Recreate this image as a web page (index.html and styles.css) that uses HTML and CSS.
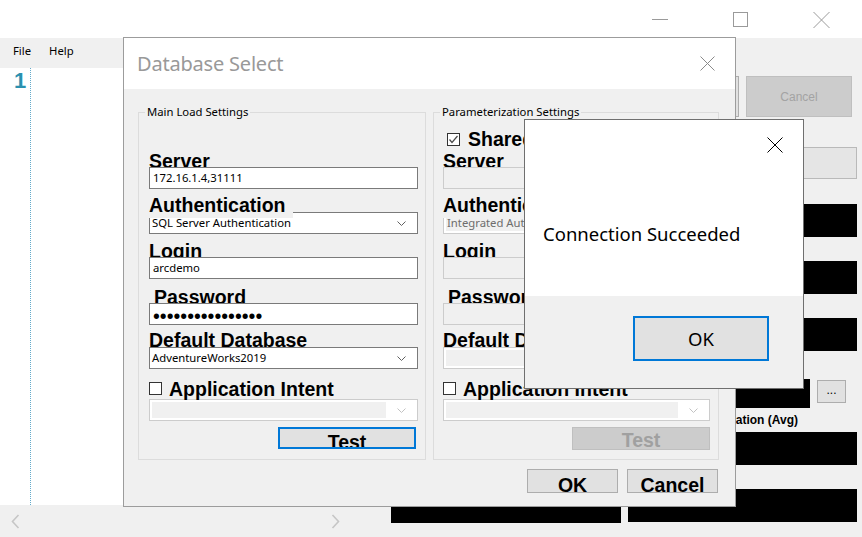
FILE: index.html
```html
<!DOCTYPE html>
<html>
<head>
<meta charset="utf-8">
<title>Database Select</title>
<link rel="stylesheet" href="styles.css">
</head>
<body>
<div class="app">
  <div class="titlebar">
    <div class="cap"><svg width="16" height="16"><line x1="0" y1="8.5" x2="16" y2="8.5"/></svg></div>
    <div class="cap"><svg width="16" height="16"><rect x="0.5" y="1.5" width="14" height="14"/></svg></div>
    <div class="cap"><svg width="17" height="17"><line x1="0.5" y1="1" x2="16.5" y2="17"/><line x1="16.5" y1="1" x2="0.5" y2="17"/></svg></div>
  </div>
  <div class="menubar"><span>File</span><span>Help</span></div>
  <div class="main">
    <div class="editor-col">
      <div class="editor">
        <div class="gutter"><span class="ln">1</span></div>
        <div class="code"></div>
      </div>
      <div class="hscroll">
        <div class="arr arr-l"><svg width="9" height="15"><polyline points="7.5,1 1.5,7.5 7.5,14"/></svg></div>
        <div class="track"></div>
        <div class="arr arr-r"><svg width="9" height="15"><polyline points="1.5,1 7.5,7.5 1.5,14"/></svg></div>
      </div>
    </div>
    <div class="panel">
      <div class="actions">
        <div class="pbtn ok">OK</div>
        <div class="pbtn cancel">Cancel</div>
      </div>
      <div class="wide"></div>
      <div class="fields">
        <div class="fld"><div class="fld-lbl">Server</div><div class="bar"></div></div>
        <div class="fld"><div class="fld-lbl">Database</div><div class="bar"></div></div>
        <div class="fld"><div class="fld-lbl">Start Time</div><div class="bar"></div></div>
        <div class="fld"><div class="fld-lbl">End Time</div><div class="bar"></div></div>
        <div class="fld"><div class="fld-lbl">Workload</div><div class="bar"></div></div>
        <div class="fld"><div class="fld-lbl">Replay</div><div class="bar"></div></div>
        <div class="fld f4"><div class="fld-lbl">Folder</div><div class="bar short"></div></div>
        <div class="fld f4"><div class="fld-lbl">Output</div><div class="barrow"><div class="bar short part"></div><div class="dots">...</div></div></div>
        <div class="fld"><div class="fld-lbl">Execution Count</div><div class="bar"></div></div>
        <div class="fld"><div class="fld-lbl right">Execution Duration (Avg)</div><div class="bar"></div></div>
        <div class="fld"><div class="fld-lbl">CPU (Avg)</div><div class="bar b6l"></div></div>
        <div class="fld"><div class="fld-lbl">Reads (Avg)</div><div class="bar"></div></div>
      </div>
    </div>
  </div>
</div>

<div class="dlg">
  <div class="dlg-title">
    <span class="dlg-name">Database Select</span>
    <svg class="dlg-x" width="15" height="15"><line x1="0.5" y1="0.5" x2="14.5" y2="14.5"/><line x1="14.5" y1="0.5" x2="0.5" y2="14.5"/></svg>
  </div>
  <div class="dlg-body">
    <div class="groups">
      <fieldset class="grp grp-main">
        <legend>Main Load Settings</legend>
        <div class="gbody">
          <div class="toprow"></div>
          <div class="lbl l-server">Server</div>
          <div class="tb">172.16.1.4,31111</div>
          <div class="lbl l-auth">Authentication</div>
          <div class="cb under"><span class="val">SQL Server Authentication</span><span class="chev"><svg width="9" height="5"><polyline points="0.5,0.5 4.5,4.5 8.5,0.5"/></svg></span></div>
          <div class="lbl l-login">Login</div>
          <div class="tb">arcdemo</div>
          <div class="lbl l-pass">Password</div>
          <div class="tb pw">••••••••••••••••</div>
          <div class="lbl l-db">Default Database</div>
          <div class="cb"><span class="val">AdventureWorks2019</span><span class="chev"><svg width="9" height="5"><polyline points="0.5,0.5 4.5,4.5 8.5,0.5"/></svg></span></div>
          <div class="chkrow"><span class="box"></span><span>Application Intent</span></div>
          <div class="cb dis"><span class="val"></span><span class="chev"><svg width="9" height="5"><polyline points="0.5,0.5 4.5,4.5 8.5,0.5"/></svg></span></div>
          <div class="btnrow main-row"><div class="wbtn test">Test</div></div>
        </div>
      </fieldset>
      <fieldset class="grp grp-param">
        <legend>Parameterization Settings</legend>
        <div class="gbody">
          <div class="toprow share"><span class="box"><svg width="11" height="11"><polyline points="1.5,5.5 4,8.5 9.5,2"/></svg></span><span>Shared Server</span></div>
          <div class="lbl l-server">Server</div>
          <div class="tb dis"></div>
          <div class="lbl l-auth">Authentication</div>
          <div class="cb dis under"><span class="val">Integrated Authentication</span><span class="chev"><svg width="9" height="5"><polyline points="0.5,0.5 4.5,4.5 8.5,0.5"/></svg></span></div>
          <div class="lbl l-login">Login</div>
          <div class="tb dis"></div>
          <div class="lbl l-pass">Password</div>
          <div class="tb dis"></div>
          <div class="lbl l-db">Default Database</div>
          <div class="cb dis"><span class="val"></span><span class="chev"><svg width="9" height="5"><polyline points="0.5,0.5 4.5,4.5 8.5,0.5"/></svg></span></div>
          <div class="chkrow"><span class="box"></span><span>Application Intent</span></div>
          <div class="cb dis"><span class="val"></span><span class="chev"><svg width="9" height="5"><polyline points="0.5,0.5 4.5,4.5 8.5,0.5"/></svg></span></div>
          <div class="btnrow"><div class="wbtn test-dis">Test</div></div>
        </div>
      </fieldset>
    </div>
    <div class="dlg-actions">
      <div class="wbtn dbtn">OK</div>
      <div class="wbtn dbtn">Cancel</div>
    </div>
  </div>
</div>

<div class="msg">
  <div class="msg-body">
    <svg class="msg-x" width="16" height="16"><line x1="0.5" y1="0.5" x2="15.5" y2="15.5"/><line x1="15.5" y1="0.5" x2="0.5" y2="15.5"/></svg>
    <div class="msg-text">Connection Succeeded</div>
  </div>
  <div class="msg-foot"><div class="msg-ok">OK</div></div>
</div>
</body>
</html>
```

FILE: styles.css
```css
* { box-sizing: border-box; }
html, body { margin: 0; padding: 0; }
body {
  width: 862px;
  height: 537px;
  overflow: hidden;
  position: relative;
  background: #f0f0f0;
  color: #000;
  font-family: "Noto Sans", "Liberation Sans", sans-serif;
  font-size: 11.3px;
}

/* ---------- background application ---------- */
.app { display: flex; flex-direction: column; height: 537px; }
.titlebar { height: 38px; background: #fff; display: flex; justify-content: flex-end; }
.cap { width: 81px; height: 38px; display: flex; align-items: center; justify-content: center; }
.cap svg { stroke: #9a9a9a; stroke-width: 1; fill: none; }
.menubar { height: 30px; background: #f0f0f0; display: flex; gap: 18px; padding-left: 13px; line-height: 26px; }
.main { flex: 1; display: flex; min-height: 0; }
.editor-col { width: 350px; display: flex; flex-direction: column; }
.editor { flex: 1; background: #fff; display: flex; }
.gutter { width: 31px; border-right: 1px dotted #63abcb; padding: 1px 0 0 14px; }
.ln { font: bold 22px/24px "Liberation Sans", sans-serif; color: #2b91af; }
.code { flex: 1; }
.hscroll { height: 32px; display: flex; align-items: center; padding-right: 2px; }
.arr { height: 32px; display: flex; align-items: center; justify-content: center; }
.arr-l { width: 31px; }
.arr-r { width: 25px; }
.arr svg { fill: none; stroke: #c6c6c6; stroke-width: 1.6; }
.track { flex: 1; }

.panel { flex: 1; padding: 8px 5px 0 41px; display: flex; flex-direction: column; }
.actions { display: flex; justify-content: flex-end; gap: 7px; padding-right: 5px; }
.pbtn {
  height: 41px; border: 1px solid #adadad; background: #e1e1e1;
  font: 12px "Liberation Sans", sans-serif;
  display: flex; align-items: center; justify-content: center;
}
.pbtn.ok { width: 100px; }
.pbtn.cancel { width: 106px; background: #cccccc; border-color: #bfbfbf; color: #a3a3a3; }
.wide { margin-top: 30px; height: 32px; border: 1px solid #b9b9b9; background: #e5e5e5; }
.fields { margin-top: 1px; display: grid; grid-template-columns: 230px 229px; column-gap: 7px; }
.fld-lbl {
  height: 24px;
  font: bold 12px/24px "Liberation Sans", sans-serif;
  white-space: nowrap; overflow: hidden;
}
.fld-lbl.right { text-align: right; padding-right: 59px; }
.f4 .fld-lbl { height: 28px; }
.bar { height: 33px; background: #000; }
.bar.short { height: 29px; }
.barrow { display: flex; gap: 7px; align-items: flex-start; }
.bar.part { width: 182px; }
.dots {
  margin-top: 1px; width: 29px; height: 23px; border: 1px solid #adadad; background: #e1e1e1;
  font: 12px/18px "Liberation Sans", sans-serif; text-align: center;
}
.b6l { height: 34px; }

/* ---------- Database Select dialog ---------- */
.dlg {
  position: absolute; left: 123px; top: 37px; z-index: 10;
  width: 613px; height: 470px;
  border: 1px solid #9c9c9c; background: #f0f0f0;
  display: flex; flex-direction: column;
}
.dlg-title {
  height: 51px; background: #fff; flex: none;
  display: flex; align-items: center; justify-content: space-between;
  padding: 0 20px 0 13px;
}
.dlg-name { font-size: 20px; line-height: 27px; color: #999; letter-spacing: -0.2px; }
.dlg-x { stroke: #8a8a8a; stroke-width: 1; }
.dlg-body { flex: 1; padding: 15px 16px 0 14px; }
.groups { display: flex; gap: 7px; }
.grp { margin: 0; padding: 0; border: 1px solid #dcdcdc; height: 356px; min-width: 0; }
.grp-main { width: 288px; }
.grp-param { width: 286px; }
.grp legend { margin-left: 6px; padding: 0 2px; line-height: 16px; font-size: 11.3px; }
.grp-main .gbody { padding: 0 7px 0 10px; }
.grp-param .gbody { padding: 0 8px 0 9px; }

.toprow { height: 22px; margin-top: 8px; }
.toprow.share {
  display: flex; align-items: center; gap: 8px; padding-left: 4px;
  font: bold 19.5px/22px "Liberation Sans", sans-serif; white-space: nowrap;
}
.lbl { font: bold 19.5px/22px "Liberation Sans", sans-serif; white-space: nowrap; overflow: hidden; }
.l-server { height: 17px; }
.l-auth {
  margin-top: 5px; height: 24px; width: fit-content; padding-right: 7px;
  background: #f0f0f0; position: relative; z-index: 1;
}
.l-login { margin-top: 6px; height: 17px; }
.l-pass { margin-top: 7px; height: 17px; padding-left: 5px; }
.l-db { margin-top: 4px; height: 18px; }

.tb {
  height: 22px; border: 1px solid #7a7a7a; background: #fff;
  line-height: 20px; padding-left: 3px; white-space: nowrap; overflow: hidden;
}
.tb.pw { font: 19.5px/20px "Liberation Sans", sans-serif; padding-top: 2px; }
.tb.dis { border-color: #cccccc; background: #f0f0f0; }

.cb {
  height: 22px; border: 1px solid #7a7a7a; background: #fff;
  display: flex; align-items: stretch;
}
.cb.under { margin-top: -6px; }
.cb .val { flex: 1; line-height: 20px; padding-left: 2px; white-space: nowrap; overflow: hidden; }
.cb .chev { width: 31px; display: flex; align-items: center; justify-content: center; }
.cb .chev svg { fill: none; stroke: #606060; stroke-width: 1; }
.cb.dis { border-color: #cccccc; padding: 2px 0 2px 2px; }
.cb.dis .val { background: #f0f0f0; color: #6d6d6d; line-height: 16px; padding-left: 1px; }
.cb.dis .chev svg { stroke: #c2c2c2; }

.chkrow {
  margin-top: 9px; height: 21px; display: flex; align-items: center; gap: 7px;
  font: bold 19.5px/22px "Liberation Sans", sans-serif; white-space: nowrap;
}
.box { width: 13px; height: 13px; border: 1px solid #333; background: #fff; flex: none; display: flex; }
.box svg { fill: none; stroke: #4a4a4a; stroke-width: 1.2; }

.btnrow { display: flex; justify-content: flex-end; margin-top: 6px; }
.btnrow.main-row { padding-right: 2px; }
.wbtn {
  font: bold 19.5px/22px "Liberation Sans", sans-serif; text-align: center;
  overflow: hidden; white-space: nowrap;
}
.test { width: 138px; height: 22px; border: 2px solid #0078d7; background: #e1e1e1; padding-top: 2px; }
.test-dis { width: 138px; height: 23px; border: 1px solid #bfbfbf; background: #cccccc; color: #a0a0a0; padding-top: 1px; }
.dlg-actions { display: flex; justify-content: flex-end; gap: 9px; margin-top: 9px; padding-right: 1px; }
.dbtn { width: 91px; height: 24px; border: 1px solid #adadad; background: #e1e1e1; padding-top: 4px; }

/* ---------- message box ---------- */
.msg {
  position: absolute; left: 524px; top: 119px; z-index: 20;
  width: 280px; height: 270px;
  border: 1px solid #6f6f6f; background: #f0f0f0;
  display: flex; flex-direction: column;
}
.msg-body {
  height: 176px; background: #fff; flex: none;
  display: flex; flex-direction: column; padding: 17px 20px 0 18px;
}
.msg-x { align-self: flex-end; stroke: #000; stroke-width: 1; flex: none; }
.msg-text { margin-top: 68px; font-size: 18.5px; line-height: 25px; color: #000; }
.msg-foot { flex: 1; display: flex; justify-content: flex-end; align-items: flex-start; padding: 20px 34px 0 0; }
.msg-ok {
  width: 136px; height: 45px; border: 2px solid #0078d7; background: #e1e1e1;
  font-size: 18.5px; line-height: 41px; text-align: center;
}
```
